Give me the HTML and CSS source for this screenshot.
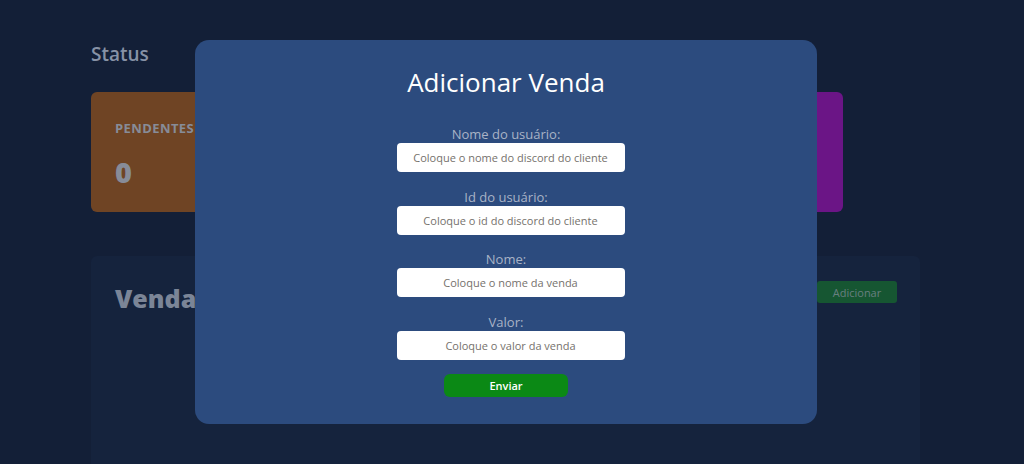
FILE: index.html
```html
<!DOCTYPE html>
<html lang="pt-BR">
<head>
<meta charset="utf-8">
<title>Adicionar Venda</title>
<link rel="stylesheet" href="styles.css">
</head>
<body>
<main class="page">
  <h2 class="section-title">Status</h2>
  <div class="cards">
    <div class="card card-orange">
      <div class="card-label">PENDENTES</div>
      <div class="card-value">0</div>
    </div>
    <div class="card card-green">
      <div class="card-label">APROVADAS</div>
      <div class="card-value">0</div>
    </div>
    <div class="card card-blue">
      <div class="card-label">CANCELADAS</div>
      <div class="card-value">0</div>
    </div>
    <div class="card card-purple">
      <div class="card-label">TOTAL</div>
      <div class="card-value">0</div>
    </div>
  </div>
  <section class="sales">
    <div class="sales-head">
      <h2 class="sales-title">Vendas</h2>
      <button class="btn-add">Adicionar</button>
    </div>
  </section>
</main>

<div class="overlay">
  <form class="modal">
    <h1 class="modal-title">Adicionar Venda</h1>
    <div class="field">
      <label>Nome do usuário:</label>
      <input type="text" placeholder="Coloque o nome do discord do cliente">
    </div>
    <div class="field">
      <label>Id do usuário:</label>
      <input type="text" placeholder="Coloque o id do discord do cliente">
    </div>
    <div class="field">
      <label>Nome:</label>
      <input type="text" placeholder="Coloque o nome da venda">
    </div>
    <div class="field">
      <label>Valor:</label>
      <input type="text" placeholder="Coloque o valor da venda">
    </div>
    <button type="button" class="btn-send">Enviar</button>
  </form>
</div>
</body>
</html>
```
FILE: styles.css
```css
* { box-sizing: border-box; }
html, body { margin: 0; height: 100%; }
body {
  background: #131f37;
  font-family: "Open Sans", "Noto Sans", sans-serif;
  overflow: hidden;
}
.page {
  width: 829px;
  margin-left: 91px;
  padding-top: 42px;
}
.section-title {
  margin: 0;
  font-size: 19px;
  font-weight: 600;
  color: #8792a6;
  line-height: 24px;
}
.cards {
  display: grid;
  grid-template-columns: repeat(4, 170px);
  gap: 24px;
  margin-top: 26px;
}
.card {
  height: 120px;
  border-radius: 6px;
  padding: 28px 24px;
}
.card-orange { background: #6f4424; }
.card-green { background: #1e5a33; }
.card-blue { background: #1f4f7a; }
.card-purple { background: #6b1586; }
.card-label {
  font-size: 13px;
  font-weight: 700;
  color: #878c98;
  line-height: 16px;
  letter-spacing: 0.4px;
}
.card-value {
  margin-top: 20px;
  font-size: 29px;
  font-weight: 800;
  color: #878c98;
  line-height: 32px;
}
.sales {
  margin-top: 44px;
  height: 230px;
  background: #15233d;
  border-radius: 6px;
  padding: 25px 23px 0 24px;
}
.sales-head {
  display: flex;
  justify-content: space-between;
  align-items: flex-start;
}
.sales-title {
  margin: 0;
  font-size: 25px;
  font-weight: 800;
  color: #7b8597;
  line-height: 34px;
}
.btn-add {
  width: 80px;
  height: 22px;
  border: 0;
  border-radius: 3px;
  background: #165632;
  color: #687f80;
  font-family: inherit;
  font-size: 11px;
}
.overlay {
  position: fixed;
  inset: 0;
}
.modal {
  position: absolute;
  left: 195px;
  top: 40px;
  width: 622px;
  height: 384px;
  background: #2c4b7e;
  border-radius: 14px;
  display: flex;
  flex-direction: column;
  align-items: center;
  padding-top: 24px;
}
.modal-title {
  margin: 0 0 25px;
  font-size: 26px;
  font-weight: 400;
  color: #ffffff;
  line-height: 36px;
}
.field {
  display: flex;
  flex-direction: column;
  align-items: center;
  margin-bottom: 15.5px;
}
.field label {
  font-size: 13px;
  color: #a9b3c6;
  line-height: 18px;
}
.field input {
  width: 228px;
  height: 29px;
  margin-left: 9px;
  border: 0;
  border-radius: 4px;
  background: #ffffff;
  text-align: center;
  font-family: inherit;
  font-size: 11px;
  outline: none;
}
.field input::placeholder { color: #75716c; }
.btn-send {
  margin-top: -1px;
  width: 124px;
  height: 23px;
  border: 0;
  border-radius: 6px;
  background: #0b8915;
  color: #ffffff;
  font-family: inherit;
  font-size: 11px;
  font-weight: 600;
}
```
